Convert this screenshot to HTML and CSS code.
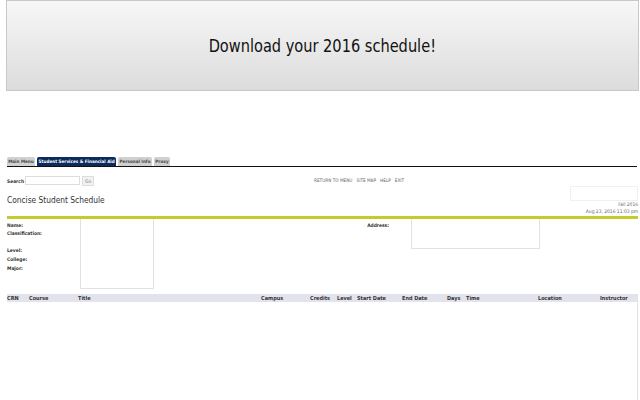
FILE: index.html
```html
<!DOCTYPE html>
<html lang="en">

<head>
    <meta charset="UTF-8">
    <meta name="viewport" content="width=device-width, initial-scale=1.0">
    <title>Concise Student Schedule</title>
    <link rel="stylesheet" href="styles.css">
</head>

<body>
    <div class="banner"><span class="banner-text">Download your 2016 schedule!</span></div>

    <div class="page">
        <div class="tabs">
            <span class="tab">Main Menu</span>
            <span class="tab active">Student Services &amp; Financial Aid</span>
            <span class="tab">Personal Info</span>
            <span class="tab">Proxy</span>
        </div>

        <div class="toolbar">
            <div class="search">
                <label class="label">Search</label>
                <span class="search-input"></span>
                <span class="go">Go</span>
            </div>
            <div class="links">
                <span>RETURN TO MENU</span>
                <span>SITE MAP</span>
                <span>HELP</span>
                <span>EXIT</span>
            </div>
        </div>

        <div class="heading">
            <h1>Concise Student Schedule</h1>
            <div class="stamp">
                <div class="stamp-box"></div>
                <div>Fall 2016</div>
                <div>Aug 23, 2016 11:03 pm</div>
            </div>
        </div>

        <div class="rule"></div>

        <div class="info">
            <div class="fields">
                <div class="label name-row">Name:</div>
                <div class="label gap-after">Classification:</div>
                <div class="label">Level:</div>
                <div class="label">College:</div>
                <div class="label">Major:</div>
            </div>
            <div class="photo"></div>
            <div class="label address-label">Address:</div>
            <div class="address"></div>
        </div>

        <div class="schedule">
            <table>
                <colgroup>
                    <col class="c-crn"><col class="c-course"><col class="c-title"><col class="c-campus">
                    <col class="c-credits"><col class="c-level"><col class="c-start"><col class="c-end">
                    <col class="c-days"><col class="c-time"><col class="c-location"><col class="c-instructor">
                </colgroup>
                <tr>
                    <th>CRN</th><th>Course</th><th>Title</th><th>Campus</th>
                    <th>Credits</th><th>Level</th><th>Start Date</th><th>End Date</th>
                    <th>Days</th><th>Time</th><th>Location</th><th>Instructor</th>
                </tr>
            </table>
        </div>
    </div>
</body>

</html>
```

FILE: styles.css
```css
* {
    margin: 0;
    padding: 0;
    box-sizing: border-box;
}

html, body {
    height: 400px;
    overflow: hidden;
}

body {
    background-color: #fff;
    font-family: "DejaVu Sans Condensed", "DejaVu Sans", sans-serif;
    font-size: 4.9px;
    color: #333;
}

.banner {
    display: flex;
    align-items: center;
    justify-content: center;
    width: 633px;
    height: 91px;
    margin-left: 6px;
    background: linear-gradient(#f7f7f7, #dcdcdc);
    border: 1px solid #c8c8c8;
    font-size: 18px;
    color: #111;
}

.banner-text {
    display: inline-block;
    transform: scaleX(0.9);
}

.page {
    padding: 66px 2px 0 7px;
}

.tabs {
    display: flex;
    gap: 2.5px;
    height: 10px;
    margin-right: 1px;
    border-bottom: 1px solid #111;
    font-size: 4.6px;
}

.tab {
    display: block;
    height: 9px;
    padding: 1.5px 1.2px 0;
    background-color: #d0d0d0;
    border-radius: 2px 2px 0 0;
    font-weight: bold;
    color: #444;
}

.tab.active {
    background-color: #0c2a5c;
    color: #fff;
}

.toolbar {
    display: flex;
    align-items: center;
    height: 11px;
    margin-top: 8px;
}

.search {
    display: flex;
    align-items: center;
    width: 307px;
}

.label {
    font-weight: bold;
    color: #333;
}

.search-input {
    width: 55px;
    height: 9px;
    margin-left: 1px;
    border: 1px solid #ddd;
}

.go {
    width: 12px;
    height: 10px;
    margin-left: 2px;
    background-color: #f2f2f2;
    border: 1px solid #ddd;
    text-align: center;
    line-height: 8px;
    color: #777;
}

.links {
    display: flex;
    gap: 4px;
    font-size: 4.7px;
    color: #666;
}

.heading {
    display: flex;
    justify-content: space-between;
    height: 30px;
}

h1 {
    margin-top: 9px;
    font-size: 8.3px;
    font-weight: normal;
    color: #333;
}

.stamp {
    width: 68px;
    text-align: right;
    color: #666;
    line-height: 7px;
}

.stamp-box {
    height: 15px;
    border: 1px solid #f0f0f0;
}

.rule {
    height: 3px;
    background-color: #c4cc2a;
}

.info {
    display: flex;
    height: 75px;
}

.fields {
    width: 73px;
    padding-top: 2px;
    line-height: 9px;
}

.name-row {
    margin-bottom: -1px;
}

.gap-after {
    margin-bottom: 8px;
}

.photo {
    width: 74px;
    height: 70px;
    border: 1px solid #e2e2e2;
    border-top: none;
}

.address-label {
    width: 235px;
    padding-top: 2px;
    line-height: 9px;
    text-align: right;
}

.address {
    width: 129px;
    height: 30px;
    margin-left: 22px;
    border: 1px solid #e2e2e2;
    border-top: none;
}

.schedule {
    height: 106px;
    border-right: 1px solid #e2e2e2;
}

table {
    width: 100%;
    table-layout: fixed;
    border-collapse: collapse;
}

th {
    height: 8px;
    background-color: #e3e3ee;
    text-align: left;
    font-size: 5.5px;
    font-weight: bold;
    color: #333;
    white-space: nowrap;
}

.c-crn { width: 22px; }
.c-course { width: 49px; }
.c-title { width: 183px; }
.c-campus { width: 49px; }
.c-credits { width: 27px; }
.c-level { width: 20px; }
.c-start { width: 45px; }
.c-end { width: 45px; }
.c-days { width: 19px; }
.c-time { width: 72px; }
.c-location { width: 62px; }
```
